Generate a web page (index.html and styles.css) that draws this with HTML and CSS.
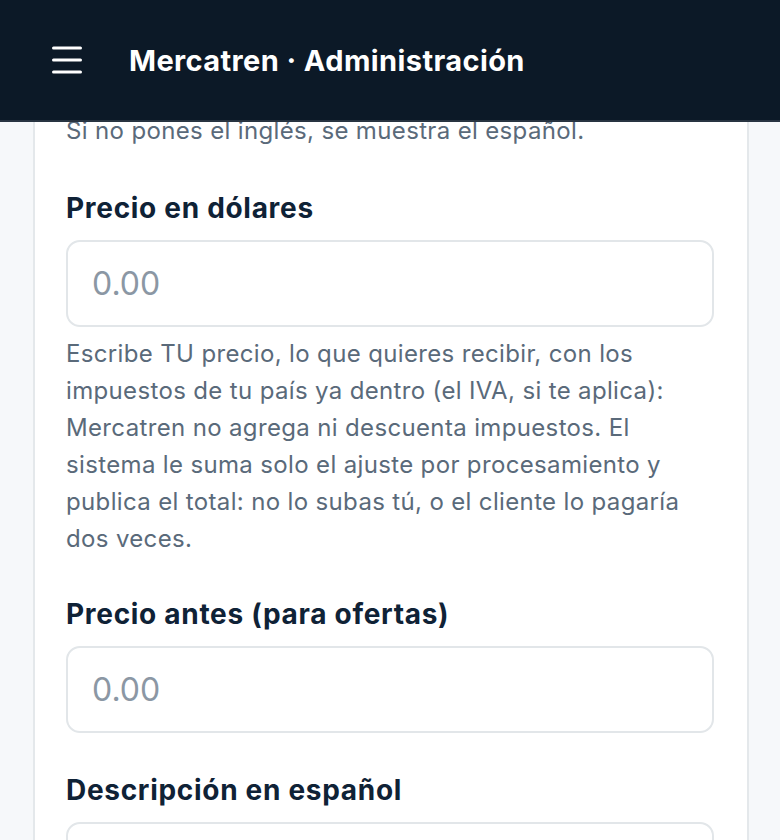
FILE: index.html
```html
<!DOCTYPE html>
<html lang="es">
<head>
<meta charset="utf-8">
<title>Mercatren · Administración</title>
<link rel="stylesheet" href="styles.css">
</head>
<body>
<header class="topbar">
  <button class="menu-btn" aria-label="Menú">
    <svg width="32" height="28" viewBox="0 0 32 28" fill="none" stroke="#ffffff" stroke-width="3" stroke-linecap="round">
      <path d="M2.5 2h27M2.5 14h27M2.5 26h27"/>
    </svg>
  </button>
  <h1 class="brand">Mercatren · Administración</h1>
</header>
<main class="page">
  <section class="card">
    <p class="hint hint-top">Si no pones el inglés, se muestra el español.</p>

    <div class="field">
      <label class="label" for="precio">Precio en dólares</label>
      <input class="input" id="precio" type="text" placeholder="0.00">
      <p class="hint">Escribe TU precio, lo que quieres recibir, con los impuestos de tu país ya dentro (el IVA, si te aplica): Mercatren no agrega ni descuenta impuestos. El sistema le suma solo el ajuste por procesamiento y publica el total: no lo subas tú, o el cliente lo pagaría dos veces.</p>
    </div>

    <div class="field">
      <label class="label" for="antes">Precio antes (para ofertas)</label>
      <input class="input" id="antes" type="text" placeholder="0.00">
    </div>

    <div class="field">
      <label class="label" for="desc">Descripción en español</label>
      <textarea class="input textarea" id="desc"></textarea>
    </div>
  </section>
</main>
</body>
</html>
```

FILE: styles.css
```css
* { box-sizing: border-box; }
html, body {
  margin: 0;
  padding: 0;
  height: 100%;
}
body {
  background: #f6f8fa;
  font-family: Inter, "Noto Sans", "Liberation Sans", sans-serif;
  overflow: hidden;
  display: flex;
  flex-direction: column;
}
.topbar {
  flex: 0 0 auto;
  height: 122px;
  background: #0c1927;
  border-bottom: 2px solid #283441;
  display: flex;
  align-items: center;
  padding: 0 0 0 51px;
  gap: 46px;
}
.menu-btn {
  background: none;
  border: 0;
  padding: 0;
  display: flex;
  cursor: pointer;
}
.brand {
  margin: 0;
  color: #ffffff;
  font-size: 29px;
  font-weight: 700;
  letter-spacing: 0.4px;
}
.page {
  flex: 1 1 auto;
  overflow: hidden;
  padding: 0 31px 0 33px;
}
.card {
  background: #ffffff;
  border: 2px solid #e4e8eb;
  border-top: 0;
  padding: 0 33px 0 31px;
}
.hint {
  margin: 0;
  color: #5a6a7a;
  font-size: 24px;
  line-height: 37px;
  letter-spacing: 0.35px;
}
.hint-top {
  margin-top: -10px;
  margin-bottom: 41px;
}
.field {
  margin-bottom: 39px;
  display: flex;
  flex-direction: column;
}
.label {
  color: #0f2236;
  font-size: 28px;
  font-weight: 700;
  line-height: 36px;
  letter-spacing: 0.7px;
  margin-bottom: 14px;
}
.input {
  width: 100%;
  height: 87px;
  border: 2px solid #e2e6e9;
  border-radius: 14px;
  padding: 0 24px;
  font-family: inherit;
  font-size: 32px;
  color: #0f2236;
  background: #ffffff;
  outline: none;
}
.input::placeholder {
  color: #8b97a4;
}
.input + .hint {
  margin-top: 8px;
}
.textarea {
  height: 180px;
  resize: none;
}
```
